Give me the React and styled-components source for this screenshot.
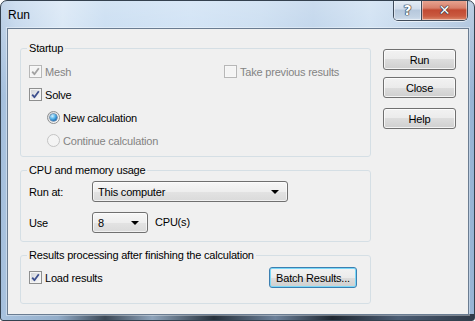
import React from 'react';
import styled, { createGlobalStyle } from 'styled-components';

const Global = createGlobalStyle`
  html, body {
    margin: 0;
    padding: 0;
    background: #ffffff;
  }
  body {
    font-family: "Liberation Sans", Arial, sans-serif;
    font-size: 11px;
    letter-spacing: -0.2px;
    color: #000;
  }
`;

const Window = styled.div`
  box-sizing: border-box;
  width: 475px;
  height: 321px;
  display: flex;
  flex-direction: column;
  padding: 0 5px 5px 6px;
  border: 1px solid #34414f;
  border-radius: 7px 7px 3px 3px;
  overflow: hidden;
  background:
    linear-gradient(90deg, #a9c3df 0%, #93adc9 12%, #3c4856 22%, #8ea3ba 32%, #26303b 45%, #6d819a 58%, #1f2731 70%, #4c5d74 84%, #303a48 100%) bottom / 100% 6px no-repeat,
    linear-gradient(180deg, rgba(255,255,255,0.35) 0%, rgba(255,255,255,0) 30%),
    linear-gradient(90deg, #a3bedc 0%, #b5cde7 3%, #cfe1f3 13%, #bcd5ee 22%, #c4dbf2 40%, #bdd5ed 55%, #b0cae6 66%, #c3d9ef 78%, #a9c3e0 92%, #98b4d4 100%);
`;

const TitleBar = styled.div`
  height: 27px;
  display: flex;
  align-items: flex-start;
`;

const Title = styled.div`
  margin: 7px 0 0 1px;
  font-size: 12px;
  line-height: 14px;
  letter-spacing: 0;
  color: #000;
`;

const Caption = styled.div`
  margin: -1px 1px 0 auto;
  display: flex;
  height: 20px;
  border: 1px solid #3f4b5a;
  border-top: none;
  border-radius: 0 0 5px 5px;
  overflow: hidden;
  box-shadow: 0 1px 0 rgba(255,255,255,0.6);
`;

const CapButton = styled.div`
  width: ${p => p.$w}px;
  display: flex;
  align-items: center;
  justify-content: center;
  font-family: "DejaVu Sans", sans-serif;
  font-weight: bold;
  letter-spacing: 0;
  color: #fff;
  background: ${p => p.$red
    ? 'linear-gradient(180deg, #e9a895 0%, #d8806b 40%, #c24a32 50%, #c95a40 80%, #dc8a6c 100%)'
    : 'linear-gradient(180deg, #e6eef6 0%, #d0dceb 45%, #b6c8dc 50%, #c2d2e3 85%, #d3e0ee 100%)'};
  box-shadow: inset 0 0 0 1px rgba(255,255,255,0.45);
  & + & {
    border-left: 1px solid #3f4b5a;
  }
`;

const Glyph = styled.span`
  font-size: ${p => p.$size}px;
  line-height: 1;
  text-shadow: 0 0 1px #283341, 0 0 1px #283341, 0 0 1px #283341, 0 0 1px #283341;
`;

const Client = styled.div`
  flex: 1;
  display: flex;
  align-items: flex-start;
  padding: 13px 11px 0 12px;
  border: 1px solid #6a7c91;
  background: #f0f0f0;
  box-shadow: 0 0 0 1px rgba(255,255,255,0.35);
`;

const Groups = styled.div`
  width: 351px;
  display: flex;
  flex-direction: column;
  gap: 7px;
`;

const Group = styled.fieldset`
  box-sizing: border-box;
  height: ${p => p.$h}px;
  margin: 0;
  min-width: 0;
  padding: ${p => p.$pad || '0 8px'};
  border: 1px solid #d5dfe5;
  border-radius: 3px;
`;

const Legend = styled.legend`
  padding: 0 2px;
  margin-left: -2px;
  font-size: 11px;
  line-height: 13px;
  color: #000;
`;

const Row = styled.div`
  display: flex;
  align-items: center;
  height: ${p => p.$h || 23}px;
  padding-left: ${p => p.$indent || 0}px;
`;

const Cell = styled.div`
  display: flex;
  align-items: center;
  width: ${p => p.$w ? `${p.$w}px` : 'auto'};
`;

const Label = styled.span`
  margin-left: 3px;
  color: ${p => p.$disabled ? '#838383' : '#000'};
  white-space: nowrap;
`;

const Box = styled.span`
  box-sizing: border-box;
  width: 13px;
  height: 13px;
  flex: none;
  display: flex;
  align-items: center;
  justify-content: center;
  border: 1px solid ${p => p.$disabled ? '#b7b7b7' : '#8e8f8f'};
  background: ${p => p.$disabled
    ? '#f4f4f4'
    : 'linear-gradient(135deg, #cdd1d6 0%, #e9eaec 55%, #fbfbfb 100%)'};
  box-shadow: inset 0 0 0 1px ${p => p.$disabled ? '#f7f7f7' : '#f4f4f4'};
`;

const Circle = styled.span`
  box-sizing: border-box;
  width: 13px;
  height: 13px;
  flex: none;
  border-radius: 50%;
  display: flex;
  align-items: center;
  justify-content: center;
  border: 1px solid ${p => p.$disabled ? '#c4c4c4' : '#8e8f8f'};
  background: ${p => p.$disabled
    ? '#f4f4f4'
    : 'linear-gradient(135deg, #cfd2d6 0%, #eeeeee 55%, #ffffff 100%)'};
`;

const Dot = styled.span`
  width: 7px;
  height: 7px;
  border-radius: 50%;
  background: radial-gradient(circle at 35% 30%, #d4f1fd 0%, #5ab6ea 40%, #1a6bb4 75%, #0d4a86 100%);
  box-shadow: 0 0 0 0.5px #214f7d;
`;

const Combo = styled.div`
  box-sizing: border-box;
  width: ${p => p.$w}px;
  height: 21px;
  flex: none;
  display: flex;
  align-items: center;
  padding: 0 8px 0 5px;
  border: 1px solid #707070;
  border-radius: 3px;
  background: linear-gradient(180deg, #f7f7f7 0%, #eeeeee 50%, #e3e3e3 51%, #dadada 100%);
  box-shadow: inset 0 0 0 1px rgba(255,255,255,0.6);
`;

const Arrow = styled.span`
  margin-left: auto;
  width: 0;
  height: 0;
  border-left: 4px solid transparent;
  border-right: 4px solid transparent;
  border-top: 4px solid #000;
`;

const FieldName = styled.span`
  width: 63px;
  flex: none;
`;

const Side = styled.div`
  width: 73px;
  margin-left: 12px;
  padding-top: 7px;
  display: flex;
  flex-direction: column;
`;

const PushButton = styled.button`
  box-sizing: border-box;
  width: ${p => p.$w || 73}px;
  height: 21px;
  margin: ${p => p.$mt || 0}px 0 0 ${p => p.$ml || 0}px;
  padding: 0;
  font-family: inherit;
  font-size: 11px;
  letter-spacing: -0.2px;
  color: #000;
  border: 1px solid ${p => p.$default ? '#3c7fb1' : '#707070'};
  border-radius: 3px;
  background: linear-gradient(180deg, #f2f2f2 0%, #ebebeb 50%, #dddddd 50%, #cfcfcf 100%);
  box-shadow: inset 0 0 0 1px ${p => p.$default ? '#7ad8f8' : 'rgba(255,255,255,0.75)'};
`;

const Check = ({ color }) => (
  <svg width="9" height="9" viewBox="0 0 9 9">
    <path d="M1.2 4.6 L3.4 7.2 L7.8 1.2" fill="none" stroke={color} strokeWidth="1.8" strokeLinejoin="round" />
  </svg>
);

const CheckBox = ({ checked, disabled, children }) => (
  <>
    <Box $disabled={disabled}>{checked && <Check color={disabled ? '#a2a2a2' : '#3c4f8e'} />}</Box>
    <Label $disabled={disabled}>{children}</Label>
  </>
);

const Radio = ({ on, disabled, children }) => (
  <>
    <Circle $disabled={disabled}>{on && <Dot />}</Circle>
    <Label $disabled={disabled}>{children}</Label>
  </>
);

export default function App() {
  return (
    <>
      <Global />
      <Window>
        <TitleBar>
          <Title>Run</Title>
          <Caption>
            <CapButton $w={27}><Glyph $size={14}>?</Glyph></CapButton>
            <CapButton $w={45} $red><Glyph $size={14}>✕</Glyph></CapButton>
          </Caption>
        </TitleBar>
        <Client>
          <Groups>
            <Group $h={115} $pad="5px 8px 0">
              <Legend>Startup</Legend>
              <Row>
                <Cell $w={195}><CheckBox checked disabled>Mesh</CheckBox></Cell>
                <Cell><CheckBox disabled>Take previous results</CheckBox></Cell>
              </Row>
              <Row><CheckBox checked>Solve</CheckBox></Row>
              <Row $indent={18}><Radio on>New calculation</Radio></Row>
              <Row $indent={18}><Radio disabled>Continue calculation</Radio></Row>
            </Group>
            <Group $h={78} $pad="4px 8px 0">
              <Legend>CPU and memory usage</Legend>
              <Row $h={21}>
                <FieldName>Run at:</FieldName>
                <Combo $w={196}>This computer<Arrow /></Combo>
              </Row>
              <Row $h={21} style={{ marginTop: 10 }}>
                <FieldName>Use</FieldName>
                <Combo $w={56}>8<Arrow /></Combo>
                <Label style={{ marginLeft: 7, marginTop: -2 }}>CPU(s)</Label>
              </Row>
            </Group>
            <Group $h={55} $pad="5px 13px 0 8px">
              <Legend>Results processing after finishing the calculation</Legend>
              <Row $h={21}>
                <CheckBox checked>Load results</CheckBox>
                <PushButton $w={88} $default style={{ marginLeft: 'auto' }}>Batch Results...</PushButton>
              </Row>
            </Group>
          </Groups>
          <Side>
            <PushButton>Run</PushButton>
            <PushButton $mt={7}>Close</PushButton>
            <PushButton $mt={10}>Help</PushButton>
          </Side>
        </Client>
      </Window>
    </>
  );
}
